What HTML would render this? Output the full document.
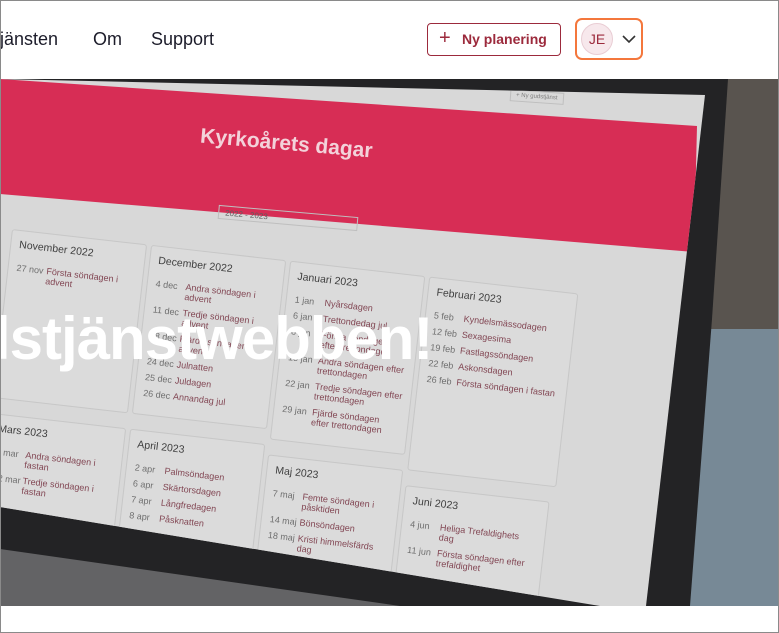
<!DOCTYPE html>
<html><head><meta charset="utf-8"><style>
*{margin:0;padding:0;box-sizing:border-box}
body{width:779px;height:633px;overflow:hidden;background:#fff;font-family:"Liberation Sans",sans-serif;position:relative}
.frame{position:absolute;inset:0;border:1px solid #8a8a8a;z-index:50;pointer-events:none}
.nav{position:absolute;top:29px;font-size:18px;color:#1c1c2a}
.btn{position:absolute;left:427px;top:23px;width:134px;height:33px;border:1.5px solid #9c2a3c;border-radius:4px;color:#9c2a3c;font-weight:bold;font-size:14px;line-height:30px;padding-left:34px}
.btn span{position:absolute;left:11px;top:-1px;font-weight:normal;font-size:20px}
.user{position:absolute;left:575px;top:18px;width:68px;height:42px;border:2.5px solid #f4773c;border-radius:7px}
.av{position:absolute;left:4px;top:3px;width:32px;height:32px;border-radius:50%;background:#f7e8ec;border:1px solid #e9cdd4;color:#9c2a3c;font-size:14px;text-align:center;line-height:30px}
.hero{position:absolute;left:0;top:79px;width:779px;height:527px;overflow:hidden;background:#4a4540}
.abs{position:absolute}
.card{position:absolute;width:136px;border:1px solid #c4c4c4;border-radius:3px;background:#d9d9d9;font-size:9px;color:#555;padding:8px 8px}
.card h4{font-size:10.5px;font-weight:normal;color:#333;margin-bottom:12px}
.card p{margin-bottom:6px;display:flex}
.card p b{font-weight:normal;width:30px;flex:none;color:#666}
.card p i{font-style:normal;color:#7a3a48}
</style></head><body>
<div class="frame"></div>
<div class="nav" style="left:0">jänsten</div>
<div class="nav" style="left:93px">Om</div>
<div class="nav" style="left:151px">Support</div>
<div class="btn"><span>+</span>Ny planering</div>
<div class="user"><div class="av">JE</div>
<svg style="position:absolute;left:44px;top:13px" width="16" height="12" viewBox="0 0 16 12"><path d="M2 3l6 6 6-6" fill="none" stroke="#333" stroke-width="1.6"/></svg></div>

<div class="hero">
 <div class="abs" style="left:600px;top:0;width:179px;height:260px;background:#4f4a45"></div>
 <div class="abs" style="left:600px;top:250px;width:179px;height:280px;background:#6f8290"></div>
 <div class="abs" style="left:0;top:0;width:779px;height:527px;background:#161618;clip-path:polygon(0 0,728px 0,712px 240px,690px 527px,0 527px)"></div>
 <div class="abs" style="left:0;top:0;width:779px;height:527px;background:#5a5a5c;clip-path:polygon(0 470px,400px 527px,0 527px)"></div>
 <div class="abs" style="left:0;top:0;width:779px;height:527px;background:#d6d6d6;clip-path:polygon(0 0,705px 16px,646px 527px,600px 527px,0 428px)">
  <div class="abs" style="left:0;top:0;width:779px;height:527px;background:#d5204b;clip-path:polygon(0 0,697px 47px,694px 173px,0 115px)"></div>
  <div class="abs" style="left:200px;top:53px;font-size:21px;font-weight:bold;color:#f3d0d8;transform:rotate(5deg)">Kyrkoårets dagar</div>
  <div class="abs" style="left:510px;top:12px;font-size:6px;color:#777;border:1px solid #bbb;padding:2px 5px;transform:rotate(4deg)">+ Ny gudstjänst</div>
  <div class="abs" style="left:218px;top:132px;width:140px;height:14px;border:1px solid #bbb;font-size:8px;color:#555;padding:2px 6px;transform:rotate(5deg)">2022 - 2023</div>
  <div class="abs" style="left:12px;top:150px;transform:rotate(6.5deg);transform-origin:0 0;width:700px;height:400px">
   <div class="card" style="left:0;top:0;height:170px"><h4>November 2022</h4><p><b>27 nov</b><i>Första söndagen i advent</i></p></div>
   <div class="card" style="left:140px;top:0;height:170px"><h4>December 2022</h4><p><b>4 dec</b><i>Andra söndagen i advent</i></p><p><b>11 dec</b><i>Tredje söndagen i advent</i></p><p><b>18 dec</b><i>Fjärde söndagen i advent</i></p><p><b>24 dec</b><i>Julnatten</i></p><p><b>25 dec</b><i>Juldagen</i></p><p><b>26 dec</b><i>Annandag jul</i></p></div>
   <div class="card" style="left:280px;top:0;height:180px"><h4>Januari 2023</h4><p><b>1 jan</b><i>Nyårsdagen</i></p><p><b>6 jan</b><i>Trettondedag jul</i></p><p><b>8 jan</b><i>Första söndagen efter trettondagen</i></p><p><b>15 jan</b><i>Andra söndagen efter trettondagen</i></p><p><b>22 jan</b><i>Tredje söndagen efter trettondagen</i></p><p><b>29 jan</b><i>Fjärde söndagen efter trettondagen</i></p></div>
   <div class="card" style="left:420px;top:0;height:195px;width:150px"><h4>Februari 2023</h4><p><b>5 feb</b><i>Kyndelsmässodagen</i></p><p><b>12 feb</b><i>Sexagesima</i></p><p><b>19 feb</b><i>Fastlagssöndagen</i></p><p><b>22 feb</b><i>Askonsdagen</i></p><p><b>26 feb</b><i>Första söndagen i fastan</i></p></div>
   <div class="card" style="left:0;top:185px;height:160px"><h4>Mars 2023</h4><p><b>5 mar</b><i>Andra söndagen i fastan</i></p><p><b>12 mar</b><i>Tredje söndagen i fastan</i></p></div>
   <div class="card" style="left:140px;top:185px;height:160px"><h4>April 2023</h4><p><b>2 apr</b><i>Palmsöndagen</i></p><p><b>6 apr</b><i>Skärtorsdagen</i></p><p><b>7 apr</b><i>Långfredagen</i></p><p><b>8 apr</b><i>Påsknatten</i></p></div>
   <div class="card" style="left:280px;top:195px;height:160px"><h4>Maj 2023</h4><p><b>7 maj</b><i>Femte söndagen i påsktiden</i></p><p><b>14 maj</b><i>Bönsöndagen</i></p><p><b>18 maj</b><i>Kristi himmelsfärds dag</i></p></div>
   <div class="card" style="left:420px;top:210px;height:140px;width:145px"><h4>Juni 2023</h4><p><b>4 jun</b><i>Heliga Trefaldighets dag</i></p><p><b>11 jun</b><i>Första söndagen efter trefaldighet</i></p></div>
  </div>
 </div>
 <div class="abs" style="left:0;top:0;width:779px;height:527px;background:rgba(255,255,255,0.06)"></div>
 <div class="abs" style="left:-6px;top:225px;font-size:60px;font-weight:bold;color:#fff;letter-spacing:-1px;white-space:nowrap">lstjänstwebben!</div>
</div>
</body></html>
